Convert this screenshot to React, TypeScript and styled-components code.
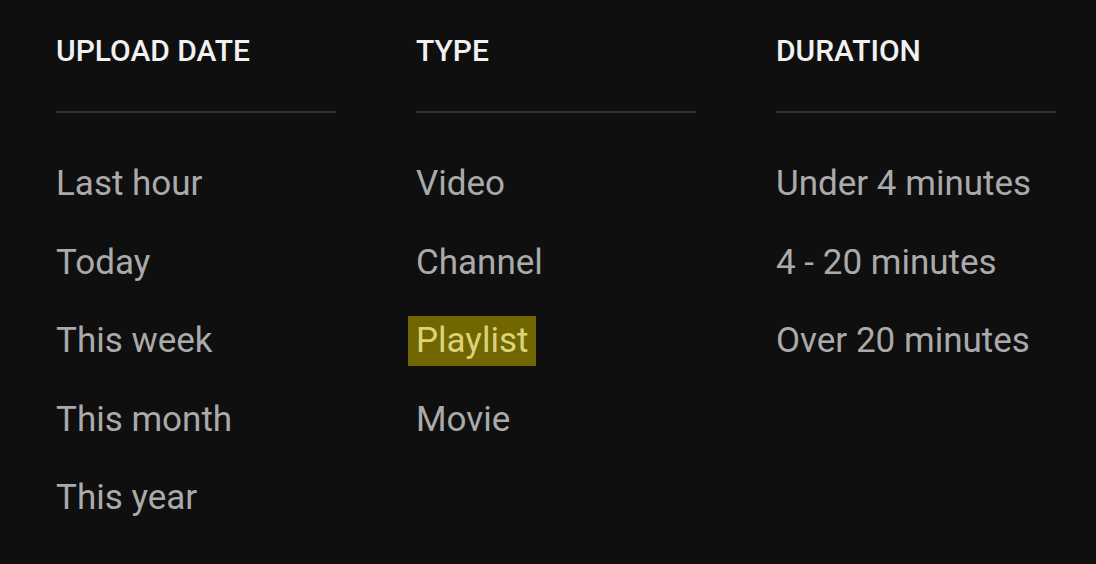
import styled, { createGlobalStyle } from "styled-components";

const GlobalStyle = createGlobalStyle`
  html, body {
    margin: 0;
    padding: 0;
    background: #0f0f0f;
  }
  body {
    font-family: Roboto, "Noto Sans", sans-serif;
    -webkit-font-smoothing: antialiased;
  }
`;

interface FilterGroup {
  title: string;
  options: string[];
}

const groups: FilterGroup[] = [
  {
    title: "Upload date",
    options: ["Last hour", "Today", "This week", "This month", "This year"],
  },
  { title: "Type", options: ["Video", "Channel", "Playlist", "Movie"] },
  {
    title: "Duration",
    options: ["Under 4 minutes", "4 - 20 minutes", "Over 20 minutes"],
  },
];

const HIGHLIGHTED = "Playlist";

export default function App() {
  return (
    <>
      <GlobalStyle />
      <Panel>
        {groups.map((group) => (
          <Column key={group.title}>
            <Heading>{group.title}</Heading>
            <Divider />
            <OptionList>
              {group.options.map((option) => (
                <Option key={option} highlighted={option === HIGHLIGHTED}>
                  {option}
                </Option>
              ))}
            </OptionList>
          </Column>
        ))}
      </Panel>
    </>
  );
}

const Panel = styled.div`
  width: 1096px;
  height: 564px;
  box-sizing: border-box;
  background: #0f0f0f;
  padding: 31px 0 0 56px;
  display: flex;
  gap: 80px;
`;

const Column = styled.div`
  width: 280px;
  display: flex;
  flex-direction: column;
`;

const Heading = styled.div`
  font-size: 30px;
  line-height: 40px;
  font-weight: 500;
  text-transform: uppercase;
  color: #f1f1f1;
  margin-bottom: 40px;
`;

const Divider = styled.div`
  height: 2px;
  background: #323232;
`;

const OptionList = styled.div`
  display: flex;
  flex-direction: column;
  align-items: flex-start;
  gap: 28.5px;
  margin-top: 46px;
`;

const Option = styled.div<{ highlighted?: boolean }>`
  font-size: 35px;
  line-height: 50px;
  padding: 0 8px;
  margin-left: -8px;
  color: ${(p) => (p.highlighted ? "#d9d37a" : "#aaaaaa")};
  background: ${(p) => (p.highlighted ? "#716600" : "transparent")};
  cursor: pointer;
`;
